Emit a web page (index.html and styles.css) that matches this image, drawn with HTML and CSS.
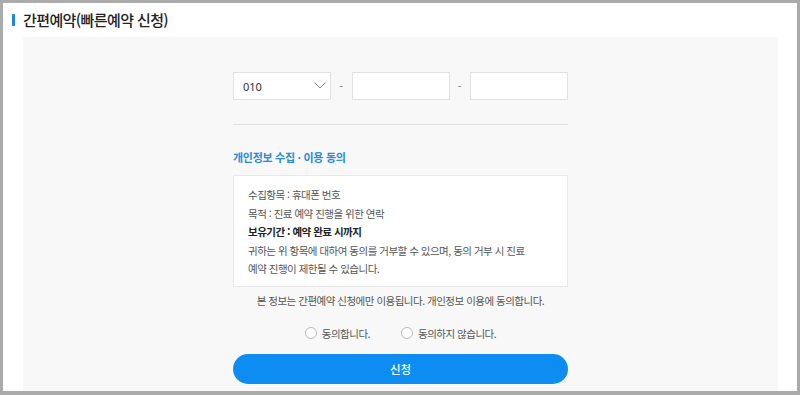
FILE: index.html
```html
<!DOCTYPE html>
<html lang="ko">
<head>
<meta charset="utf-8">
<title>간편예약</title>
<link rel="stylesheet" href="styles.css">
</head>
<body>
<div class="frame">
  <div class="head">
    <span class="head-bar"></span>
    <h1 class="head-title">간편예약(빠른예약 신청)</h1>
  </div>
  <div class="panel">
    <div class="form">
      <div class="phone">
        <div class="select">
          <span class="select-val">010</span>
          <svg class="chev" width="12" height="7" viewBox="0 0 12 7"><path d="M0.5 0.5 L6 6 L11.5 0.5" fill="none" stroke="#8a8a8a" stroke-width="1"/></svg>
        </div>
        <span class="dash">-</span>
        <div class="field"></div>
        <span class="dash">-</span>
        <div class="field"></div>
      </div>
      <div class="rule"></div>
      <h2 class="sec-title">개인정보 수집 · 이용 동의</h2>
      <div class="terms">
        <p class="t-line">수집항목 : 휴대폰 번호</p>
        <p class="t-line">목적 : 진료 예약 진행을 위한 연락</p>
        <p class="t-line t-strong">보유기간 : 예약 완료 시까지</p>
        <p class="t-line">귀하는 위 항목에 대하여 동의를 거부할 수 있으며, 동의 거부 시 진료<br>예약 진행이 제한될 수 있습니다.</p>
      </div>
      <p class="notice">본 정보는 간편예약 신청에만 이용됩니다. 개인정보 이용에 동의합니다.</p>
      <div class="radios">
        <label class="radio"><span class="circle"></span>동의합니다.</label>
        <label class="radio"><span class="circle"></span>동의하지 않습니다.</label>
      </div>
      <button class="submit" type="button">신청</button>
    </div>
  </div>
</div>
</body>
</html>
```
FILE: styles.css
```css
* { box-sizing: border-box; }
html, body { margin: 0; padding: 0; }
body {
  background: #ababab;
  padding: 3px 3px 4px 3px;
  height: 395px;
  overflow: hidden;
  font-family: "Noto Sans CJK KR", "Noto Sans", sans-serif;
}
.frame {
  background: #ffffff;
  height: 388px;
  display: flex;
  flex-direction: column;
  overflow: hidden;
}
.head {
  height: 34px;
  display: flex;
  align-items: center;
  padding-left: 9px;
}
.head-bar {
  width: 3px;
  height: 12px;
  background: #1a86d9;
  border-radius: 1px;
  margin-right: 8px;
}
.head-title {
  margin: 0;
  font-size: 15px;
  font-weight: 500;
  color: #222;
  letter-spacing: -0.6px;
  line-height: 20px;
}
.panel {
  flex: 1;
  background: #f8f8f8;
  margin: 0 19px 0 20px;
  padding-top: 35px;
}
.form {
  width: 335px;
  margin: 0 auto;
}
.phone {
  display: flex;
  align-items: center;
  justify-content: space-between;
  height: 28px;
}
.select, .field {
  width: 98px;
  height: 28px;
  background: #fff;
  border: 1px solid #e2e2e2;
}
.select {
  display: flex;
  align-items: center;
  justify-content: space-between;
  padding: 0 4px 0 9px;
}
.select-val {
  font-size: 11px;
  color: #333;
  font-family: "Noto Sans", sans-serif;
}
.chev { display: block; margin-top: -1px; }
.dash {
  font-size: 11px;
  color: #777;
  width: 10px;
  text-align: center;
}
.rule {
  height: 1px;
  background: #e2e2e2;
  margin-top: 24px;
}
.sec-title {
  margin: 24px 0 0;
  font-size: 11px;
  font-weight: 700;
  color: #2b8ad6;
  line-height: 16px;
  letter-spacing: -0.3px;
}
.terms {
  margin-top: 10px;
  height: 112px;
  background: #fff;
  border: 1px solid #e8e8e8;
  padding: 10px 10px 0 14px;
}
.t-line {
  margin: 0;
  font-size: 10.5px;
  line-height: 18.5px;
  color: #555;
  letter-spacing: -0.5px;
}
.t-strong {
  font-weight: 700;
  color: #222;
}
.notice {
  margin: 6px 0 0;
  text-align: center;
  font-size: 10.5px;
  line-height: 16px;
  color: #555;
  letter-spacing: -0.5px;
}
.radios {
  display: flex;
  justify-content: center;
  gap: 31px;
  margin-top: 16px;
  height: 16px;
}
.radio {
  display: flex;
  align-items: center;
  font-size: 10.5px;
  color: #555;
  letter-spacing: -0.5px;
}
.circle {
  width: 12px;
  height: 12px;
  border: 1px solid #b8b8b8;
  border-radius: 50%;
  background: #fff;
  margin-right: 5px;
}
.submit {
  display: block;
  width: 100%;
  height: 30px;
  margin-top: 13px;
  border: 0;
  border-radius: 15px;
  background: #0d8df2;
  color: #fff;
  font-family: "Noto Sans CJK KR", sans-serif;
  font-size: 11.5px;
  font-weight: 500;
  padding: 0;
}
```
